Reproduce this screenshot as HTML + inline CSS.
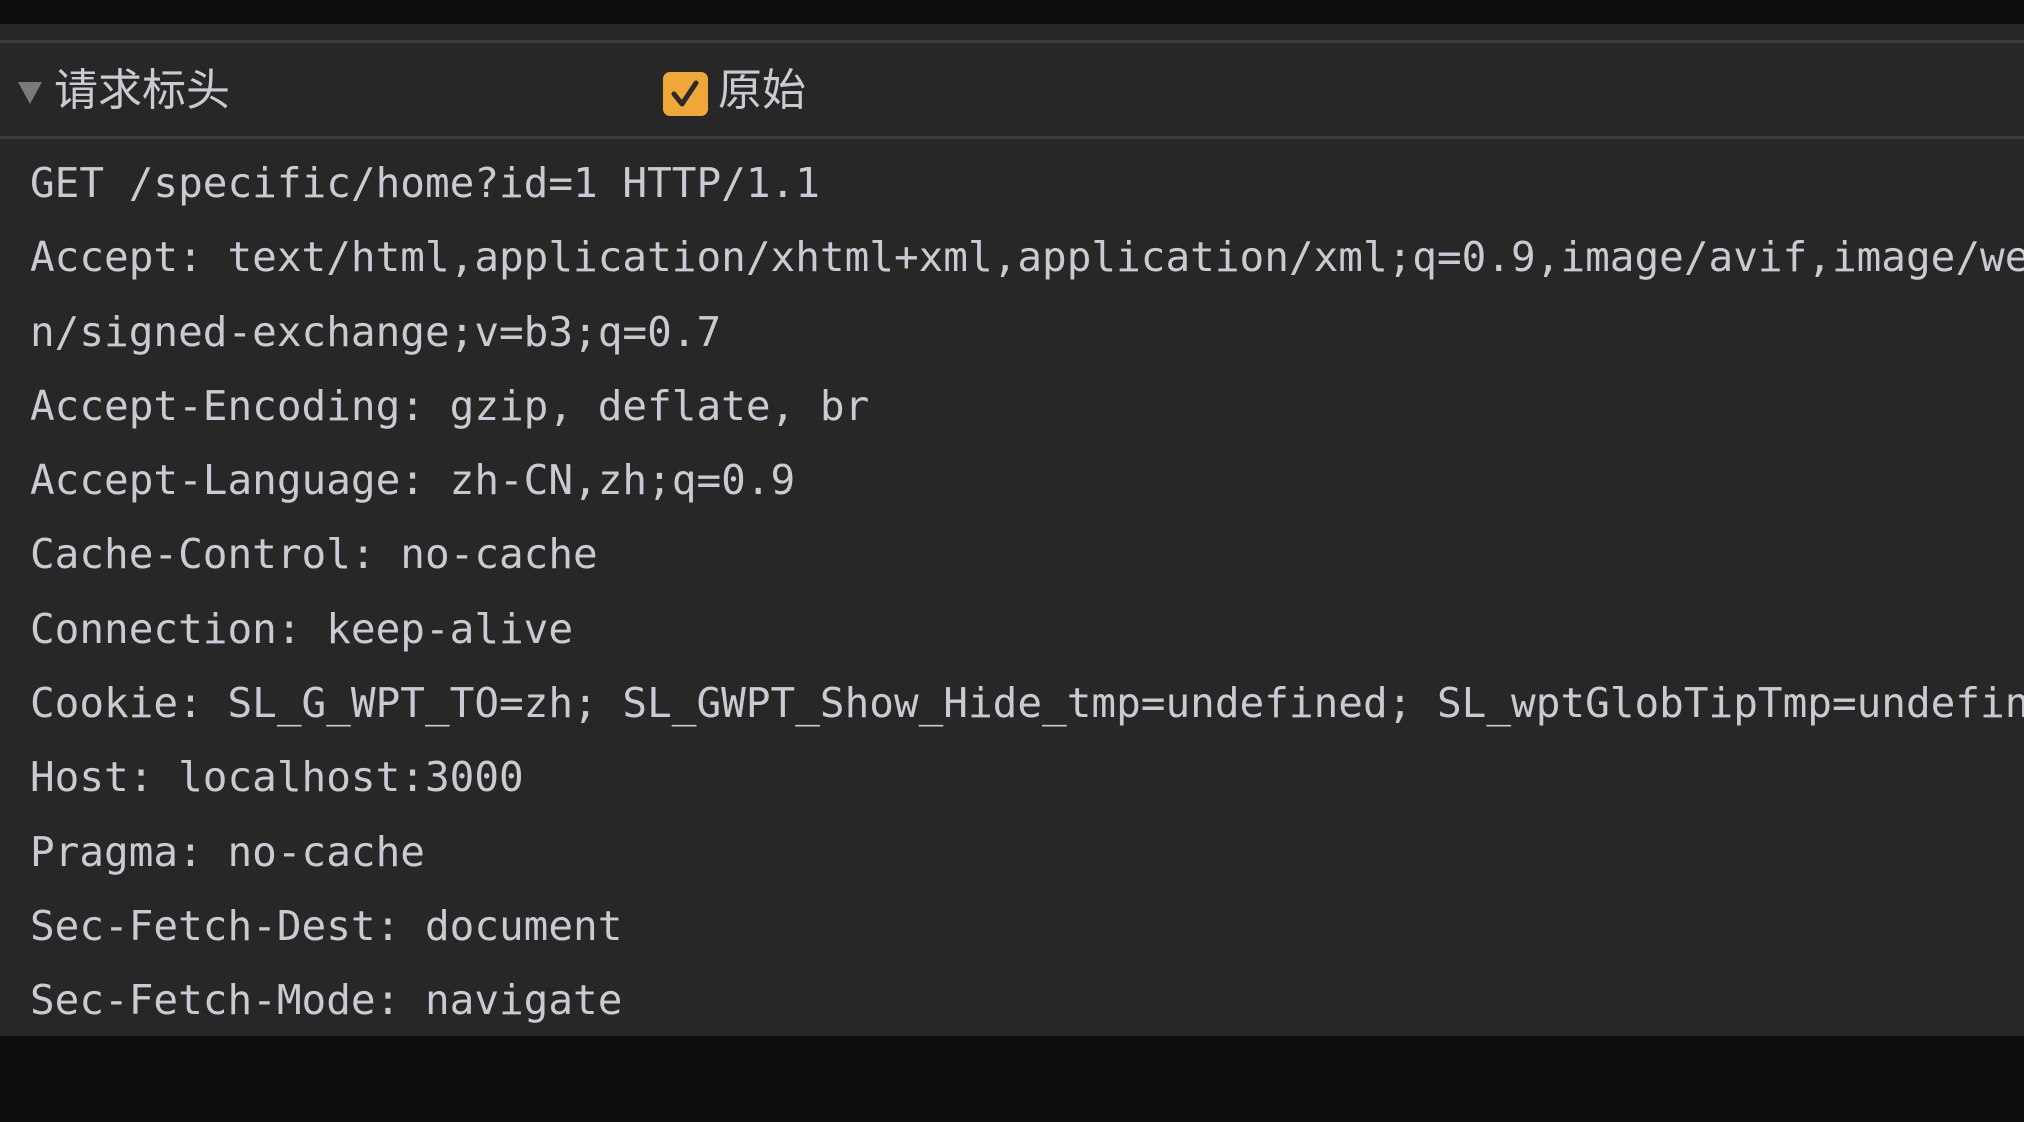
<!DOCTYPE html>
<html><head><meta charset="utf-8"><style>
html,body{margin:0;padding:0;width:2024px;height:1122px;overflow:hidden;background:#0e0e0e;}
.panel{position:absolute;left:0;top:24px;width:2024px;height:1012px;background:#272727;overflow:hidden;}
.l1{position:absolute;left:0;top:16px;width:2024px;height:3px;background:#3c3c3c;}
.l2{position:absolute;left:0;top:112px;width:2024px;height:3px;background:#3c3c3c;}
.hdr{position:absolute;top:40px;left:0;height:72px;width:2024px;font-family:"Liberation Sans","Noto Sans CJK SC",sans-serif;font-size:44px;color:#c8ccd2;}
.tri{position:absolute;left:18px;top:18px;width:0;height:0;border-left:12px solid transparent;border-right:12px solid transparent;border-top:22px solid #7a7a7a;}
.t1{position:absolute;left:54px;top:1px;line-height:52px;}
.cb{position:absolute;left:663px;top:8px;width:45px;height:44px;background:#f0a73a;border-radius:7px;}
.t2{position:absolute;left:718px;top:1px;line-height:52px;}
.body{position:absolute;left:30px;top:122px;font-family:"DejaVu Sans Mono","Liberation Mono",monospace;font-size:41px;line-height:74.3px;color:#c8ccd2;white-space:pre;}
</style></head><body>
<div class="panel">
<div class="l1"></div>
<div class="hdr">
<div class="tri"></div>
<div class="t1">请求标头</div>
<div class="cb"><svg width="45" height="44" viewBox="0 0 45 44"><path d="M11 22 L19 32 L33 11" fill="none" stroke="#2a2a2a" stroke-width="5" stroke-linecap="round" stroke-linejoin="round"/></svg></div>
<div class="t2">原始</div>
</div>
<div class="l2"></div>
<div class="body">GET /specific/home?id=1 HTTP/1.1
Accept: text/html,application/xhtml+xml,application/xml;q=0.9,image/avif,image/webp,image/apng,*/*;q=0.8,applicatio
n/signed-exchange;v=b3;q=0.7
Accept-Encoding: gzip, deflate, br
Accept-Language: zh-CN,zh;q=0.9
Cache-Control: no-cache
Connection: keep-alive
Cookie: SL_G_WPT_TO=zh; SL_GWPT_Show_Hide_tmp=undefined; SL_wptGlobTipTmp=undefined
Host: localhost:3000
Pragma: no-cache
Sec-Fetch-Dest: document
Sec-Fetch-Mode: navigate</div>
</div>
</body></html>
